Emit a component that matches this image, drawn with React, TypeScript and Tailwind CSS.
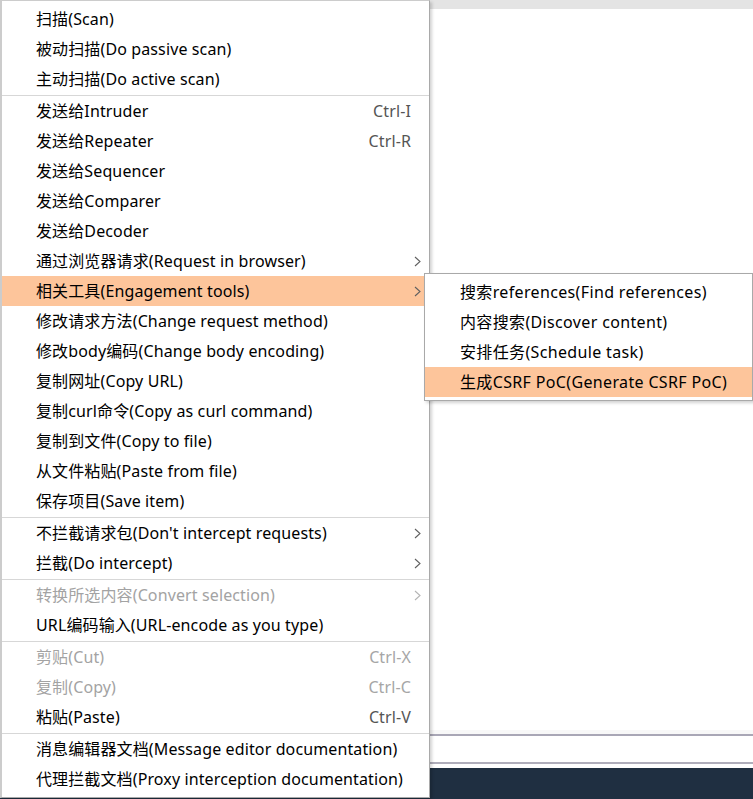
type Item =
  | { sep: true }
  | {
      sep?: false
      label: string
      shortcut?: string
      sub?: boolean
      disabled?: boolean
      active?: boolean
    }

const mainItems: Item[] = [
  { label: '扫描(Scan)' },
  { label: '被动扫描(Do passive scan)' },
  { label: '主动扫描(Do active scan)' },
  { sep: true },
  { label: '发送给Intruder', shortcut: 'Ctrl-I' },
  { label: '发送给Repeater', shortcut: 'Ctrl-R' },
  { label: '发送给Sequencer' },
  { label: '发送给Comparer' },
  { label: '发送给Decoder' },
  { label: '通过浏览器请求(Request in browser)', sub: true },
  { label: '相关工具(Engagement tools)', sub: true, active: true },
  { label: '修改请求方法(Change request method)' },
  { label: '修改body编码(Change body encoding)' },
  { label: '复制网址(Copy URL)' },
  { label: '复制curl命令(Copy as curl command)' },
  { label: '复制到文件(Copy to file)' },
  { label: '从文件粘贴(Paste from file)' },
  { label: '保存项目(Save item)' },
  { sep: true },
  { label: "不拦截请求包(Don't intercept requests)", sub: true },
  { label: '拦截(Do intercept)', sub: true },
  { sep: true },
  { label: '转换所选内容(Convert selection)', sub: true, disabled: true },
  { label: 'URL编码输入(URL-encode as you type)' },
  { sep: true },
  { label: '剪贴(Cut)', shortcut: 'Ctrl-X', disabled: true },
  { label: '复制(Copy)', shortcut: 'Ctrl-C', disabled: true },
  { label: '粘贴(Paste)', shortcut: 'Ctrl-V' },
  { sep: true },
  { label: '消息编辑器文档(Message editor documentation)' },
  { label: '代理拦截文档(Proxy interception documentation)' },
]

const subItems: Item[] = [
  { label: '搜索references(Find references)' },
  { label: '内容搜索(Discover content)' },
  { label: '安排任务(Schedule task)' },
  { label: '生成CSRF PoC(Generate CSRF PoC)', active: true },
]

function Chevron({ disabled }: { disabled?: boolean }) {
  return (
    <svg width="7" height="11" viewBox="0 0 7 11" className="shrink-0">
      <path
        d="M1 1 L6 5.5 L1 10"
        fill="none"
        stroke={disabled ? '#b4b4b4' : '#606060'}
        strokeWidth="1.1"
      />
    </svg>
  )
}

function MenuList({ items, pad }: { items: Item[]; pad: string }) {
  return (
    <>
      {items.map((it, i) =>
        it.sep ? (
          <div key={i} className="h-[2px] pt-[1px]">
            <div className="h-px bg-[#d7d7d7]" />
          </div>
        ) : (
          <div
            key={i}
            className={`flex h-[30px] items-center ${pad} pr-[8px] ${
              it.active ? 'bg-[#fdc59b]' : ''
            } ${it.disabled ? 'text-[#a3a3a3]' : 'text-[#000000]'}`}
          >
            <span className="flex-1 whitespace-nowrap">{it.label}</span>
            {it.shortcut && (
              <span className={`pr-[10px] ${it.disabled ? 'text-[#a6a6a6]' : 'text-[#555555]'}`}>
                {it.shortcut}
              </span>
            )}
            {it.sub && <Chevron disabled={it.disabled} />}
          </div>
        )
      )}
    </>
  )
}

export default function App() {
  return (
    <div className="relative h-[799px] w-[753px] overflow-hidden bg-white font-['Noto_Sans','Noto_Sans_CJK_SC',sans-serif] text-[16px] leading-none">
      {/* 背景のウィンドウ */}
      <div className="flex h-full flex-col">
        <div className="h-[9px] bg-[#e4e4e4]" />
        <div className="flex-1 bg-white" />
        <div className="h-[4px] bg-[#f8f8f8]" />
        <div className="h-[2px] bg-[#a9a7b6]" />
        <div className="h-[26px] bg-white" />
        <div className="h-[2px] bg-[#b0aebb]" />
        <div className="h-[4px] bg-white" />
        <div className="h-[31px] bg-[#1f2f41]" />
      </div>

      {/* メインメニュー */}
      <div className="absolute left-0 top-0 w-[430px] border-l-2 border-t border-b border-r border-l-[#cccccc] border-t-[#cccccc] border-b-[#a9a9a9] border-r-[#a9a9a9] bg-white pt-[3px] pb-[3px] tracking-[0.12px] shadow-[2px_2px_3px_rgba(0,0,0,0.18)]">
        <MenuList items={mainItems} pad="pl-[34px]" />
      </div>

      {/* サブメニュー */}
      <div className="absolute left-[424px] top-[273px] w-[329px] border border-[#a9a9a9] bg-white pt-[3px] pb-[3px] tracking-[0.35px] shadow-[2px_2px_3px_rgba(0,0,0,0.18)]">
        <MenuList items={subItems} pad="pl-[35px]" />
      </div>
    </div>
  )
}
